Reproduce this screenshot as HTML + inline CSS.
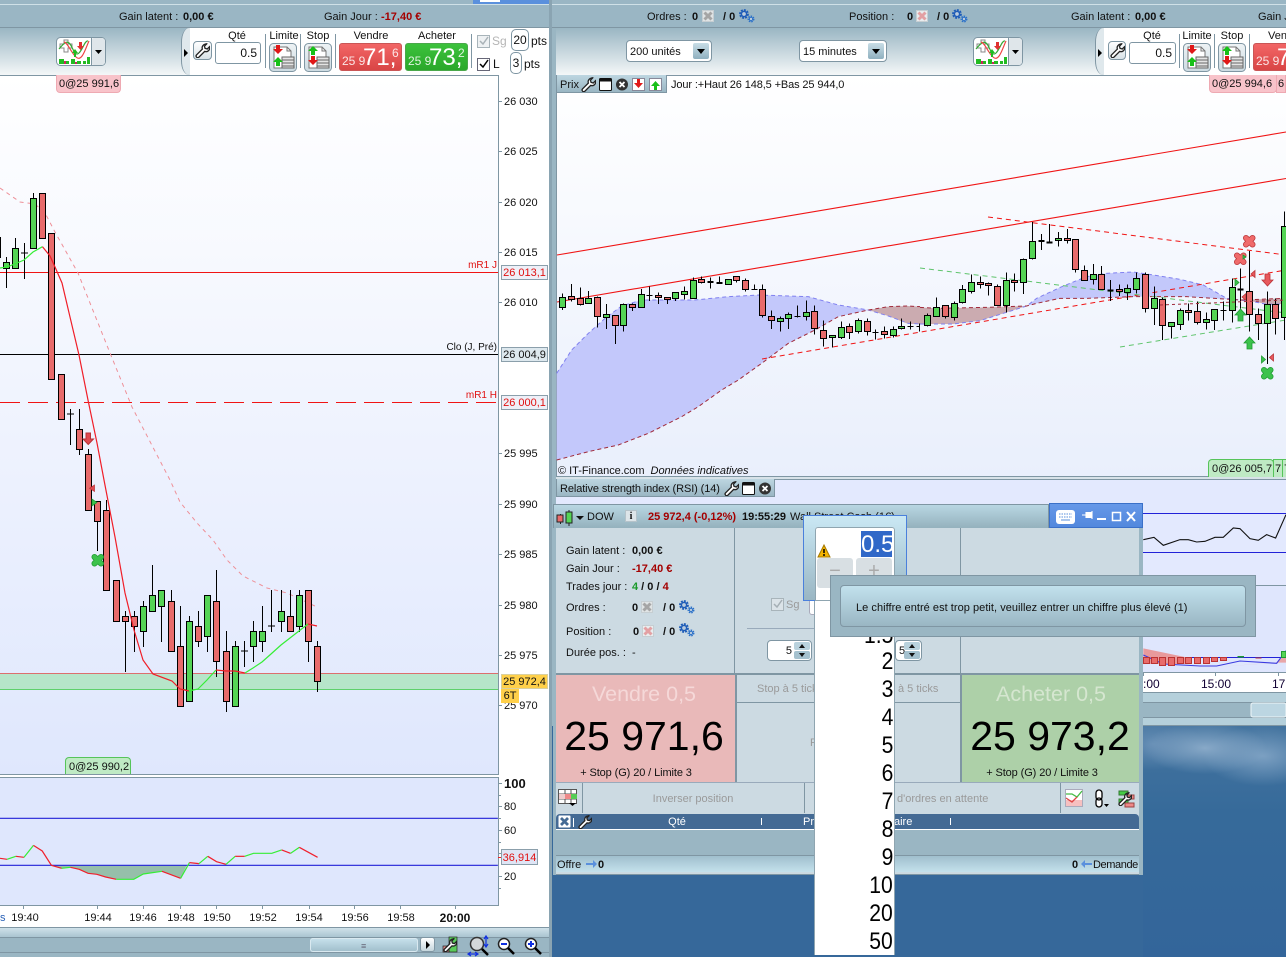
<!DOCTYPE html>
<html><head><meta charset="utf-8"><title>Trading</title>
<style>
html,body{margin:0;padding:0;width:1286px;height:957px;overflow:hidden;background:#36689a;font:11px/12px "Liberation Sans",sans-serif;color:#111}
.a{position:absolute}
.t{position:absolute;white-space:nowrap;line-height:12px;margin-top:1px}
.b{font-weight:bold}
.dr{color:#a40000}
.tb{background:linear-gradient(#9ab6c3,#f4f7f8)}
.in{position:absolute;background:#fff;border:1px solid #7f96a3;border-radius:3px;box-sizing:border-box}
.btn{position:absolute;box-sizing:border-box;border:1px solid #7f96a3;border-radius:4px;background:linear-gradient(#fff,#d8e2e7)}
.sep{position:absolute;width:1px;background:#7f96a3}
.ax{position:absolute;left:504px;white-space:nowrap;line-height:12px;margin-top:1px}
.box{position:absolute;left:501px;width:47px;height:15px;box-sizing:border-box;border:1px solid #8b9fab;text-align:center;line-height:15px}
.tagr{position:absolute;background:#f8c3ca;border:1px solid #eea9b2;border-top:0;border-radius:0 0 4px 4px;box-sizing:border-box;line-height:18px;padding-left:2px;white-space:nowrap;overflow:hidden}
.tagg{position:absolute;background:#bfeac4;border:1px solid #56c45a;border-bottom:0;border-radius:4px 4px 0 0;box-sizing:border-box;line-height:19px;padding-left:3px;white-space:nowrap;overflow:hidden}
.lbl{position:absolute;white-space:nowrap;transform:translateX(-50%);line-height:12px;margin-top:1px}
.pb{position:absolute;box-sizing:border-box;height:28px;top:43px;border-radius:3px;color:#fff;overflow:hidden}
.red{background:linear-gradient(#f26666,#d94545);border:1px solid #c95656}
.grn{background:linear-gradient(#3cc23c,#2aa82a);border:1px solid #4aa84a}
.pb span{position:absolute;white-space:nowrap}
.s{font-size:12px;top:11px;line-height:12px;opacity:.85}
.l{font-size:24px;top:1px;line-height:26px}
.g{color:#9a9a9a}
.num{position:absolute;right:393px;font-size:24px;line-height:24px;color:#000;margin-top:1px;transform:scaleX(.88);transform-origin:right center}
svg{overflow:visible}
.ch path,.ch polyline{vector-effect:non-scaling-stroke}
</style></head><body>

<!-- wallpaper -->
<div class="a" style="left:1143px;top:726px;width:143px;height:231px;overflow:hidden;background:radial-gradient(ellipse 62px 26px at 62px 22px,rgba(140,172,202,.95) 0,rgba(140,172,202,0) 100%),radial-gradient(ellipse 60px 30px at 120px 30px,rgba(130,165,198,.9) 0,rgba(130,165,198,0) 100%),radial-gradient(ellipse 50px 26px at 10px 18px,rgba(110,148,186,.8) 0,rgba(110,148,186,0) 100%),linear-gradient(#44749f,#366a9a 38%,#33659a)"></div>

<!-- LEFT WINDOW frames -->
<div class="a" style="left:0;top:0;width:552px;height:28px;background:#9ab6c4"></div>
<div class="a" style="left:473px;top:0;width:77px;height:4px;background:#5a90dd"></div>
<div class="a" style="left:480px;top:0;width:20px;height:2px;background:#fff"></div>
<div class="a" style="left:0;top:4px;width:549px;height:1px;background:#cfe0e7"></div>
<div class="a" style="left:0;top:27px;width:549px;height:1px;background:#7f96a3"></div>
<div class="a tb" style="left:0;top:28px;width:549px;height:47px"></div>
<div class="a" style="left:549px;top:0;width:3px;height:957px;background:#8aa4b2"></div>

<!-- RIGHT WINDOW frames -->
<div class="a" style="left:552px;top:0;width:734px;height:28px;background:#9ab6c4"></div>
<div class="a" style="left:552px;top:4px;width:734px;height:1px;background:#cfe0e7"></div>
<div class="a" style="left:552px;top:27px;width:734px;height:1px;background:#7f96a3"></div>
<div class="a tb" style="left:552px;top:28px;width:734px;height:47px"></div>
<div class="a" style="left:552px;top:28px;width:4px;height:698px;background:#9ab6c3"></div>
<div class="a" style="left:552px;top:726px;width:591px;height:231px;background:#36689a"></div>

<!-- CHARTS -->
<svg class="a ch" style="left:0;top:0" width="1286" height="957" viewBox="0 0 1286 957">
<defs>
<linearGradient id="bgl" x1="0" y1="0" x2="0" y2="1"><stop offset="0" stop-color="#fff"/><stop offset="1" stop-color="#dfe7fd"/></linearGradient>
<linearGradient id="bgr" x1="0" y1="0" x2="0" y2="1"><stop offset="0" stop-color="#fff"/><stop offset="1" stop-color="#e9effc"/></linearGradient>
<symbol id="w" viewBox="0 0 20 20"><path d="M15 1.500a5 5 0 0 0-5.200 6.600L2 15.900a2.200 2.200 0 0 0 3.100 3.100l7.800-7.800a5 5 0 0 0 6.500-6.200l-3 3-3-.8-.8-3 3-3a5 5 0 0 0-.6-.2z" fill="#fff" stroke="#222" stroke-width="1.300"/></symbol>
</defs>
<!-- left chart -->
<rect x="0" y="75" width="549" height="702" fill="#fff"/>
<rect x="0" y="75" width="498" height="699" fill="url(#bgl)"/>
<rect x="0" y="777" width="549" height="150" fill="#fff"/>
<rect x="0" y="777" width="498" height="128" fill="#dfe7fd"/>
<rect x="0" y="673" width="498" height="16" fill="#b6e5c9"/>
<path d="M0 673.5H498" stroke="#dc6e6e" fill="none"/>
<path d="M0 689.5H498" stroke="#5fd06c" fill="none"/>
<path d="M0 272.5H498" stroke="#f01414" fill="none"/>
<path d="M0 354.5H498" stroke="#000" fill="none"/>
<path d="M0 402.5H498" stroke="#f01414" stroke-dasharray="20 8" fill="none"/>
<path d="M0 188L20 202 35 204 45 213 55 232 78 273 110 353 132 407 170 480 180 502 197 523 213 540 227 560 243 576 267 588 287 593 317 607" fill="none" stroke="#ee9098" stroke-dasharray="4 4"/>
<g shape-rendering="crispEdges" fill="none" stroke="#000">
<path d="M0.5 237V258M6.5 257V288M15.5 238V268M24.5 243V279M21 253H28M33.5 193V198M70.5 409V445M67 414H74M79.5 409V455M88.5 449V454M97.5 521V551M106.5 500V510M125.5 611V672M134.5 611V652M143.5 601V647M152.5 565V595M161.5 606V642M171.5 590V601M180.5 606V646M189.5 616V621M198.5 611V647M207.5 636V652M216.5 570V677M226.5 631V712M235.5 641V646M244.5 641V667M241 651H248M253.5 621V662M262.5 606V652M271.5 590V632M268 626H275M281.5 590V632M290.5 590V616M299.5 590V632M308.5 641V662M317.5 641V692"/>
<path fill="#e86b6b" d="M39.5 193.5h6v45h-6zM48.5 233.5h6v146h-6zM58.5 374.5h6v45h-6zM76.5 429.5h6v20h-6zM85.5 454.5h6v56h-6zM94.5 501.5h6v20h-6zM103.5 510.5h6v80h-6zM113.5 580.5h6v41h-6zM122.5 616.5h6v5h-6zM131.5 616.5h6v10h-6zM168.5 601.5h6v50h-6zM177.5 646.5h6v60h-6zM195.5 626.5h6v15h-6zM213.5 601.5h6v60h-6zM223.5 651.5h6v50h-6zM287.5 616.5h6v15h-6zM305.5 590.5h6v51h-6zM314.5 646.5h6v35h-6z"/>
<path fill="#55d455" d="M3.5 262.5h6v6h-6zM12.5 248.5h6v20h-6zM30.5 198.5h6v50h-6zM140.5 606.5h6v25h-6zM149.5 595.5h6v16h-6zM158.5 590.5h6v16h-6zM186.5 621.5h6v80h-6zM204.5 595.5h6v41h-6zM232.5 646.5h6v60h-6zM250.5 631.5h6v15h-6zM259.5 631.5h6v10h-6zM278.5 611.5h6v10h-6zM296.5 595.5h6v31h-6z"/>
</g>
<g fill="none" stroke-width="1.200">
<path d="M0 268L7 267 17 263 24 260 33 252 42.5 246.7" stroke="#35ee35"/>
<path d="M42.5 246.7L50 256 55 267 62 283 70 317 79 355 88 400 97 443 104 480 115 537 125 593 134 630 143 660 153 674 172 681 180 689 189 691" stroke="#f01e28"/>
<path d="M189 691L198 689 207 680 216 670" stroke="#35ee35"/>
<path d="M216 670L226 671 235 671 245 673" stroke="#f01e28"/>
<path d="M245 673L253 668 262 662 271 654 281 645 290 638 299 631 308 624" stroke="#35ee35"/>
<path d="M308 624L317 626" stroke="#f01e28"/>
</g>
<path d="M86 433h4.500v6h3l-5.250 5.500-5.250-5.500h3z" fill="#e04a50" stroke="#b93338"/>
<path d="M94.500 485v6.500l-5-3.250z" fill="#e04a50" stroke="#b93338" stroke-width=".7"/>
<path d="M92 499v7l5-3.500z" fill="#3cc24c" stroke="#1f9a32" stroke-width=".7"/>
<!-- left RSI -->
<g transform="translate(0,750) scale(.3521,.3333)">
<path d="M146 346L175 355 200 352 225 358 250 370 275 373 300 381 330 388 380 388 407 372 460 364 513 385 530 346z" fill="#96bfaa"/>
<path d="M0 205H1414M0 346H1414" stroke="#2222d8" fill="none" stroke-width="1.200"/>
<g fill="none" stroke-width="1.200">
<path d="M0 325L20 328" stroke="#f0202c"/>
<path d="M20 328L45 319" stroke="#35ee35"/>
<path d="M45 319L68 322" stroke="#f0202c"/>
<path d="M68 322L95 286" stroke="#35ee35"/>
<path d="M95 286L120 303 146 346 175 355" stroke="#f0202c"/>
<path d="M175 355L200 352" stroke="#35ee35"/>
<path d="M200 352L225 358 250 370 275 373 300 381 330 388" stroke="#f0202c"/>
<path d="M330 388L380 388 407 372 460 364" stroke="#35ee35"/>
<path d="M460 364L513 385" stroke="#f0202c"/>
<path d="M513 385L538 338" stroke="#35ee35"/>
<path d="M538 338L565 341" stroke="#f0202c"/>
<path d="M565 341L590 319" stroke="#35ee35"/>
<path d="M590 319L615 335 642 343" stroke="#f0202c"/>
<path d="M642 343L668 319" stroke="#35ee35"/>
<path d="M668 319L695 319" stroke="#f0202c"/>
<path d="M695 319L720 310 772 310 800 300" stroke="#35ee35"/>
<path d="M800 300L825 310" stroke="#f0202c"/>
<path d="M825 310L850 292" stroke="#35ee35"/>
<path d="M850 292L902 322" stroke="#f0202c"/>
</g>
</g>
<!-- left borders -->
<g shape-rendering="crispEdges" stroke="#7f96a3" fill="none">
<path d="M0 75.500H498.500V774.500H0M0 777.500H498.500V905.500H0"/>
<path d="M498 101.500h4M498 151.500h4M498 202.500h4M498 252.500h4M498 302.500h4M498 453.500h4M498 504.500h4M498 554.500h4M498 605.500h4M498 655.500h4M498 705.500h4M498 783.500h4M498 795.500h3M498 806.500h4M498 818.500h3M498 830.500h4M498 842.500h3M498 853.500h3M498 876.500h4M498 888.500h3M23.500 905v4M97.500 905v4M143.500 905v4M180.500 905v4M216.500 905v4M262.500 905v4M309.500 905v4M354.500 905v4M400.500 905v4M455.500 905v4"/>
</g>
<path d="M498 857.500h3" stroke="#f02020"/>

<!-- right chart -->
<rect x="556" y="75" width="730" height="402" fill="url(#bgr)"/>
<rect x="556" y="477" width="730" height="2" fill="#d7e2e8"/>
<rect x="556" y="479" width="730" height="107" fill="#e3e9fe"/>
<rect x="556" y="586" width="730" height="86" fill="#dfe6fd"/>
<rect x="556" y="672" width="730" height="20" fill="#fff"/>
<rect x="556" y="692" width="730" height="10" fill="#b5d0db"/>
<rect x="556" y="702" width="730" height="15" fill="#9ab6c3"/>
<rect x="556" y="717" width="730" height="9" fill="#b5d0db"/>
<g shape-rendering="crispEdges" stroke="#7f96a3" fill="none"><path d="M556 75.500H1286M556.500 75V477M556 476.500H1286M556 479.500H1286M556 585.500H1286M556 672.500H1286M556 692.500H1286M556 702.500H1286M556 717.500H1286M556 725.500H1286M1215.500 672v4M1143.500 672v4M1278.500 672v4"/></g>
<rect x="1251" y="703" width="35" height="14" rx="2" fill="#bcd6e2" stroke="#eef5f8"/>
<!-- right RSI -->
<path d="M556 513.500H1286M556 552.500H1286M556 657.500H1286" stroke="#2222d8" fill="none"/>
<g transform="translate(900,478) scale(.3333)"><path d="M730 185L762 178 790 202 840 185 865 185 890 192 915 190 945 178 970 178 1000 150 1020 152 1050 182 1075 187 1100 170 1127 180 1158 110" fill="none" stroke="#111" stroke-width="1.100"/></g>
<g transform="translate(1100,640) scale(.3333)">
<path d="M130 25L260 52V72H130z" fill="#e89a9c"/>
<path d="M260 52L340 82 520 68 528 68 548 52 558 52V68L528 68 340 82z" fill="#e9a6a8"/>
<path d="M130 45L190 72 300 78 350 78 420 63 530 70 558 32" fill="none" stroke="#3a3ae0" stroke-width="1.100"/>
</g>
<g shape-rendering="crispEdges" stroke="#b33" fill="#e86b6b" transform="translate(1100,640) scale(.3333)">
<path d="M130 52h18v18h-18zM155 52h18v18h-18zM179 52h18v24h-18zM206 52h18v24h-18zM233 52h18v18h-18zM257 52h18v18h-18zM284 52h18v18h-18zM311 52h18v18h-18zM335 52h18v12h-18zM362 52h18v9h-18z"/>
<path d="M412 48h20v4h-20z" fill="#1f9a32" stroke="none"/>
<path d="M466 52h18v4h-18z" fill="#b33" stroke="none"/>
<path d="M544 34h14v18h-14z" fill="#55d455" stroke="#1f9a32"/>
</g>

<g transform="translate(555,200) scale(.33333)">
<path d="M5 520L50 450 100 400 150 355 200 318 260 300 420 300 520 290 610 285 760 290 850 315 940 330 850 350 780 390 700 430 620 490 550 540 500 570 430 620 380 650 280 700 190 735 100 755 5 780z" fill="#c3c8fb"/>
<path d="M940 330L1000 320 1060 318 1095 320V372H1060L1000 348z" fill="#cbabb0"/>
<path d="M5 520L50 450 100 400 150 355 200 318 260 300 420 300 520 290 610 285 760 290 850 315 940 330 1000 348 1060 370 1095 372" fill="none" stroke="#8080f0" stroke-dasharray="4 3"/>
<path d="M5 780L100 755 190 735 280 700 380 650 430 620 500 570 550 540 620 490 700 430 780 390 850 350 940 330 1000 320 1060 318 1095 320" fill="none" stroke="#a02a3a" stroke-dasharray="4 3"/>
</g>
<g transform="translate(920,200) scale(.33333)">
<path d="M0 322L50 325 200 322 320 318 250 340 180 362 100 372H0z" fill="#cbabb0"/>
<path d="M320 318L350 295 430 258 500 230 560 220 640 216 700 225 780 238 850 255 920 295 960 300 800 290 640 290 500 295 420 295 350 310z" fill="#c3c8fb"/>
<path d="M960 300L1098 295V312H1040L1000 305z" fill="#cbabb0"/>
<path d="M0 372L100 372 180 362 250 340 320 318 350 295 430 258 500 230 560 220 640 216 700 225 780 238 850 255 920 295 960 300 1000 305 1040 313 1098 312" fill="none" stroke="#8080f0" stroke-dasharray="4 3"/>
<path d="M0 322L50 325 200 322 320 318 350 310 420 295 500 295 640 290 800 290 960 300 1098 295" fill="none" stroke="#a02a3a" stroke-dasharray="4 3"/>
</g>
<path d="M557 255L1286 132M557 302L1286 178.500" stroke="#f01414" fill="none" stroke-width="1.100"/>
<path d="M762 359L1286 270M988 217L1286 255" stroke="#f01414" fill="none" stroke-dasharray="5 4"/>
<path d="M920 268L1286 313M1120 347L1286 320" stroke="#5fc46c" fill="none" stroke-dasharray="5 4"/>
<g transform="translate(555,200) scale(.33333)" shape-rendering="crispEdges" stroke="#000" fill="none">
<path d="M22 280V330M49 252V305M76 262V317M100 273V310M127 290V382M154 312V387M181 346V432M205 310V395M232 310V333M259 267V322M284 260V303M275 286h18M310 277V312M337 292V312M361 277V303M388 260V298M415 232V295M439 229V250M466 232V265M457 245h18M457 248h18M493 229V250M484 248h18M484 251h18M520 238V253M544 229V248M571 235V275M598 253V268M589 268h18M622 253V352M649 331V387M676 350V395M700 337V387M727 316V352M718 349h18M754 301V362M778 316V403M805 361V440M832 406V443M859 364V417M883 370V417M910 355V400M937 355V406M961 388V418M952 397h18M988 380V415M1015 380V412M1039 355V388M1066 364V388M1057 379h18M1093 370V394M1084 379h11"/>
<path fill="#e86b6b" d="M40 290h18v8h-18zM67 295h18v19h-18zM118 292h18v57h-18zM172 346h18v30h-18zM223 313h18v9h-18zM301 286h18v6h-18zM328 292h18v6h-18zM430 238h18v9h-18zM535 229h18v12h-18zM562 241h18v27h-18zM613 268h18v78h-18zM640 349h18v12h-18zM769 334h18v51h-18zM796 391h18v24h-18zM874 379h18v18h-18zM928 364h18v30h-18zM979 394h18v9h-18z"/>
<path fill="#55d455" d="M13 292h18v30h-18zM91 295h18v15h-18zM145 343h18v9h-18zM196 313h18v63h-18zM250 283h18v39h-18zM352 277h18v18h-18zM379 274h18v9h-18zM406 241h18v54h-18zM511 238h18v15h-18zM667 355h18v9h-18zM691 343h18v12h-18zM745 337h18v12h-18zM823 406h18v6h-18zM850 382h18v30h-18zM901 361h18v33h-18zM1006 388h18v18h-18zM1030 379h18v6h-18z"/>
</g>
<g transform="translate(920,200) scale(.33333)" shape-rendering="crispEdges" stroke="#000" fill="none">
<path d="M22 340V380M49 292V349M76 316V355M103 304V362M127 255V310M154 223V280M181 230V265M205 247V287M232 253V318M259 217V337M284 220V275M310 175V282M337 66V178M364 102V150M355 122h18M355 125h18M388 72V128M379 126h18M379 129h18M415 96V140M442 87V130M466 118V218M493 196V241M520 192V253M544 198V268M571 240V303M562 270h18M562 273h18M598 253V288M622 253V300M649 217V280M676 217V338M703 259V375M727 292V420M754 367V415M781 325V390M805 310V362M832 304V373M859 337V388M883 328V390M910 304V362M901 331h18M937 235V367M961 205V325M952 267h18M952 270h18M988 153V395M1015 325V420M1042 274V492M1066 295V403M1093 34V420"/>
<path fill="#e86b6b" d="M67 316h18v33h-18zM172 247h18v6h-18zM196 250h18v6h-18zM223 259h18v57h-18zM275 241h18v6h-18zM433 115h18v6h-18zM457 118h18v90h-18zM484 211h18v30h-18zM535 223h18v45h-18zM589 268h18v6h-18zM667 223h18v102h-18zM718 298h18v78h-18zM796 331h18v6h-18zM823 334h18v33h-18zM979 274h18v69h-18zM1006 343h18v27h-18zM1057 313h18v42h-18z"/>
<path fill="#55d455" d="M13 346h18v30h-18zM40 322h18v27h-18zM94 310h18v42h-18zM118 268h18v39h-18zM145 247h18v27h-18zM250 241h18v75h-18zM301 178h18v69h-18zM328 124h18v51h-18zM406 115h18v6h-18zM511 223h18v15h-18zM613 265h18v12h-18zM640 235h18v33h-18zM694 295h18v30h-18zM745 367h18v12h-18zM772 331h18v42h-18zM850 358h18v9h-18zM874 328h18v33h-18zM928 262h18v69h-18zM1033 313h18v57h-18zM1084 80h18v272h-18z"/>
</g>
<path d="M1160 305L1286 300" stroke="#a02a3a" stroke-dasharray="3 3" fill="none"/>
<!-- markers -->
<g stroke-linecap="round" fill="none">
<path d="M1246 238l6.500 6.500M1252.500 238l-6.500 6.500" stroke="#b93338" stroke-width="6"/>
<path d="M1246 238l6.500 6.500M1252.500 238l-6.500 6.500" stroke="#ef6a6a" stroke-width="4.500"/>
<path d="M1237 255.500l6.500 6.500M1243.500 255.500l-6.500 6.500" stroke="#b93338" stroke-width="6"/>
<path d="M1237 255.500l6.500 6.500M1243.500 255.500l-6.500 6.500" stroke="#ef6a6a" stroke-width="4.500"/>
<path d="M1264 370l6.500 6.500M1270.500 370l-6.500 6.500" stroke="#1f9a32" stroke-width="6"/>
<path d="M1264 370l6.500 6.500M1270.500 370l-6.500 6.500" stroke="#3cc24c" stroke-width="4.500"/>
<path d="M94.500 557l6.500 6.500M101 557l-6.500 6.500" stroke="#1f9a32" stroke-width="6"/>
<path d="M94.500 557l6.500 6.500M101 557l-6.500 6.500" stroke="#3cc24c" stroke-width="4.500"/>
</g>
<g stroke-width=".8">
<path d="M1265 274h5v6h3l-5.500 6-5.500-6h3z" fill="#e8585c" stroke="#b93338"/>
<path d="M1238 321v-6h-3l5.500-6 5.500 6h-3v6z" fill="#3cc24c" stroke="#1f9a32"/>
<path d="M1247 349v-6h-3l5.500-6 5.500 6h-3v6z" fill="#3cc24c" stroke="#1f9a32"/>
<path d="M1235 279v7l4-3.500z" fill="#3cc24c" stroke="#1f9a32"/>
<path d="M1243 255v4l3-2z" fill="#3cc24c" stroke="#1f9a32"/>
<path d="M1255 270.500v7l-4-3.500z" fill="#e8585c" stroke="#b93338"/>
<path d="M1246 293.500v7l-4-3.500z" fill="#e8585c" stroke="#b93338"/>
<path d="M1261.500 356v7l4-3.500z" fill="#3cc24c" stroke="#1f9a32"/>
<path d="M1273.500 354v7l-4-3.500z" fill="#e8585c" stroke="#b93338"/>
</g>
</svg>

<!-- LEFT: labels -->
<span class="t" style="left:119px;top:10px">Gain latent :</span><span class="t b" style="left:183px;top:10px">0,00 €</span>
<span class="t" style="left:324px;top:10px">Gain Jour :</span><span class="t b dr" style="left:381px;top:10px">-17,40 €</span>
<div class="a" style="left:181px;top:28px;width:10px;height:47px;background:#dfe8ec;border-left:1px solid #7f96a3;border-radius:8px 0 0 8px/14px 0 0 14px;box-sizing:border-box"></div>
<div class="a" style="left:190px;top:28px;width:359px;height:47px;background:#fff"></div>
<div class="a" style="left:184px;top:49px;width:0;height:0;border-left:4px solid #000;border-top:4px solid transparent;border-bottom:4px solid transparent"></div>
<div class="btn" style="left:193px;top:41px;width:19px;height:19px"><svg width="15" height="15" style="position:absolute;left:1px;top:1px"><use href="#w" width="15" height="15"/></svg></div>
<span class="lbl" style="left:237px;top:29px">Qté</span>
<div class="in" style="left:215px;top:42px;width:46px;height:22px;text-align:right;padding:4px 3px 0 0;line-height:13px;font-size:12px">0.5</div>
<div class="sep" style="left:265px;top:34px;height:34px"></div>
<span class="lbl" style="left:284px;top:29px">Limite</span>
<div class="sep" style="left:300px;top:34px;height:34px"></div>
<span class="lbl" style="left:318px;top:29px">Stop</span>
<div class="sep" style="left:335px;top:34px;height:34px"></div>
<span class="lbl" style="left:371px;top:29px">Vendre</span>
<span class="lbl" style="left:437px;top:29px">Acheter</span>
<div class="pb red" style="left:339px;width:63px"><span class="s" style="left:2px">25 9</span><span class="l" style="left:23px">71,</span><span style="left:52px;top:2px;font-size:12px;line-height:14px;opacity:.85">6</span></div>
<div class="pb grn" style="left:405px;width:63px"><span class="s" style="left:2px">25 9</span><span class="l" style="left:23px">73,</span><span style="left:52px;top:2px;font-size:12px;line-height:14px;opacity:.85">2</span></div>
<div class="sep" style="left:471px;top:34px;height:34px"></div>
<svg class="a" style="left:477px;top:35px" width="13" height="13"><rect x=".5" y=".5" width="12" height="12" fill="#eef1f3" stroke="#a8b4ba"/><path d="M3 6l3 3 5-7" fill="none" stroke="#a9b2b7" stroke-width="1.500"/></svg>
<span class="t" style="left:492px;top:34px;color:#b5b5b5;font-size:12px">Sg</span>
<div class="in" style="left:511px;top:29px;width:18px;height:22px;text-align:center;line-height:21px;font-size:12px;border-radius:5px">20</div>
<span class="t" style="left:531px;top:34px;font-size:12px">pts</span>
<svg class="a" style="left:477px;top:58px" width="13" height="13"><rect x=".5" y=".5" width="12" height="12" fill="#fff" stroke="#667"/><path d="M3 6l3 3 5-7" fill="none" stroke="#000" stroke-width="1.500"/></svg>
<span class="t" style="left:493px;top:57px;font-size:12px">L</span>
<div class="in" style="left:510px;top:52px;width:12px;height:22px;text-align:center;line-height:21px;font-size:12px;border-radius:5px">3</div>
<span class="t" style="left:524px;top:57px;font-size:12px">pts</span>

<div class="tagr" style="left:56px;top:75px;width:65px;height:18px">0@25 991,6</div>
<div class="tagg" style="left:65px;top:757px;width:66px;height:17px">0@25 990,2</div>

<span class="ax" style="top:95px">26 030</span><span class="ax" style="top:145px">26 025</span><span class="ax" style="top:196px">26 020</span><span class="ax" style="top:246px">26 015</span><span class="ax" style="top:296px">26 010</span>
<span class="ax" style="top:447px">25 995</span><span class="ax" style="top:498px">25 990</span><span class="ax" style="top:548px">25 985</span><span class="ax" style="top:599px">25 980</span><span class="ax" style="top:649px">25 975</span><span class="ax" style="top:699px">25 970</span>
<div class="box" style="top:265px;color:#e01010;background:#eef0f8">26 013,1</div>
<div class="box" style="top:347px;background:#dde8ee">26 004,9</div>
<div class="box" style="top:395px;color:#e01010;background:#eef0f8">26 000,1</div>
<div class="box" style="top:674px;background:#ffd04a;border-color:#d9d0a0">25 972,4</div>
<div class="box" style="top:689px;width:18px;height:14px;background:#ffd04a;border:0;line-height:15px">6T</div>
<span class="t" style="right:789px;top:259px;color:#e01010;font-size:10px">mR1 J</span>
<span class="t" style="right:789px;top:341px;font-size:10px">Clo (J, Pré)</span>
<span class="t" style="right:789px;top:389px;color:#e01010;font-size:10px">mR1 H</span>

<span class="ax b" style="top:777px;font-size:13px">100</span><span class="ax" style="top:800px;left:504px">80</span><span class="ax" style="top:824px">60</span><span class="ax" style="top:870px">20</span>
<div class="box" style="left:501px;top:849px;width:37px;height:16px;color:#e01010;background:#dfe5f5;line-height:16px">36,914</div>

<span class="lbl" style="left:25px;top:911px">19:40</span><span class="lbl" style="left:98px;top:911px">19:44</span><span class="lbl" style="left:143px;top:911px">19:46</span><span class="lbl" style="left:181px;top:911px">19:48</span><span class="lbl" style="left:217px;top:911px">19:50</span><span class="lbl" style="left:263px;top:911px">19:52</span><span class="lbl" style="left:309px;top:911px">19:54</span><span class="lbl" style="left:355px;top:911px">19:56</span><span class="lbl" style="left:401px;top:911px">19:58</span><span class="lbl b" style="left:455px;top:911px;font-size:12px">20:00</span>
<span class="t" style="left:0;top:911px;color:#2a62b8">s</span>

<!-- left bottom bar -->
<div class="a" style="left:0;top:927px;width:549px;height:30px;background:#9ab6c3"></div>
<div class="a" style="left:0;top:927px;width:549px;height:10px;background:linear-gradient(#7f96a3 0,#7f96a3 1px,#cfe1e9 1px,#aac4d0 100%)"></div>
<div class="a" style="left:0;top:937px;width:549px;height:1px;background:#7f96a3"></div>
<div class="a" style="left:0;top:952px;width:549px;height:1px;background:#7f96a3"></div>
<div class="a" style="left:310px;top:938px;width:108px;height:14px;border-radius:3px;background:linear-gradient(#c8e2ed,#9fbdca);box-shadow:inset 0 0 0 1px #d9e9f0"></div>
<div class="t" style="left:361px;top:939px;color:#667;font-size:9px">≡</div>
<div class="a" style="left:420px;top:937px;width:15px;height:15px;border-radius:3px;background:linear-gradient(#fff,#c5d6dd);border:1px solid #7f96a3;box-sizing:border-box"></div>
<div class="a" style="left:426px;top:941px;width:0;height:0;border-left:4px solid #000;border-top:4px solid transparent;border-bottom:4px solid transparent"></div>
<svg class="a" style="left:443px;top:933px" width="100" height="24">
<rect x="6" y="4" width="8" height="15" fill="#5acb5a" stroke="#222" stroke-width=".7"/><rect x="0" y="13" width="6" height="6" fill="#e08a8a" stroke="#222" stroke-width=".7"/>
<use href="#w" x="0" y="5" width="14" height="14"/>
<circle cx="34" cy="11" r="6.500" fill="#d4d8da" stroke="#333" stroke-width="1.500"/><path d="M39 16l6 6" stroke="#000" stroke-width="2.500"/>
<path d="M43 4v9M41 6l2-3 2 3M41 11l2 3 2-3M26 21h8M28 19l-3 2 3 2M32 19l3 2-3 2" stroke="#1030e0" stroke-width="1.200" fill="none"/>
<circle cx="61" cy="11" r="5.500" fill="#fff" stroke="#222" stroke-width="1.500"/><path d="M58 11h6" stroke="#1030e0" stroke-width="2"/><path d="M65 15l6 6" stroke="#000" stroke-width="2.500"/>
<circle cx="88" cy="11" r="5.500" fill="#fff" stroke="#222" stroke-width="1.500"/><path d="M85 11h6M88 8v6" stroke="#1030e0" stroke-width="2"/><path d="M92 15l6 6" stroke="#000" stroke-width="2.500"/>
</svg>

<!-- RIGHT toolbar -->
<span class="t" style="left:647px;top:10px">Ordres :</span><span class="t b" style="left:692px;top:10px">0</span>
<span class="t b" style="left:723px;top:10px">/ 0</span>
<span class="t" style="left:849px;top:10px">Position :</span><span class="t b" style="left:907px;top:10px">0</span>
<span class="t b" style="left:937px;top:10px">/ 0</span>
<span class="t" style="left:1071px;top:10px">Gain latent :</span><span class="t b" style="left:1135px;top:10px">0,00 €</span>
<span class="t" style="left:1258px;top:10px">Gain J</span>
<div class="in" style="left:626px;top:40px;width:86px;height:22px;border-radius:4px;padding:5px 0 0 3px;line-height:13px">200 unités</div>
<div class="a" style="left:693px;top:43px;width:16px;height:16px;border-radius:2px;background:linear-gradient(#c8dde6,#8fb0bf)"></div><div class="a" style="left:697px;top:49px;border-top:5px solid #000;border-left:4px solid transparent;border-right:4px solid transparent"></div>
<div class="in" style="left:799px;top:40px;width:88px;height:22px;border-radius:4px;padding:5px 0 0 3px;line-height:13px">15 minutes</div>
<div class="a" style="left:868px;top:43px;width:16px;height:16px;border-radius:2px;background:linear-gradient(#c8dde6,#8fb0bf)"></div><div class="a" style="left:872px;top:49px;border-top:5px solid #000;border-left:4px solid transparent;border-right:4px solid transparent"></div>

<div class="a" style="left:1095px;top:28px;width:10px;height:47px;background:#dfe8ec;border-left:1px solid #7f96a3;border-radius:8px 0 0 8px/14px 0 0 14px;box-sizing:border-box"></div>
<div class="a" style="left:1104px;top:28px;width:182px;height:47px;background:#fff"></div>
<div class="a" style="left:1098px;top:49px;border-left:4px solid #000;border-top:4px solid transparent;border-bottom:4px solid transparent"></div>
<div class="btn" style="left:1108px;top:41px;width:18px;height:19px"><svg width="15" height="15" style="position:absolute;left:1px;top:1px"><use href="#w" width="15" height="15"/></svg></div>
<span class="lbl" style="left:1152px;top:29px">Qté</span>
<div class="in" style="left:1129px;top:42px;width:47px;height:22px;text-align:right;padding:4px 3px 0 0;line-height:13px;font-size:12px">0.5</div>
<div class="sep" style="left:1179px;top:34px;height:34px"></div>
<span class="lbl" style="left:1197px;top:29px">Limite</span>
<div class="sep" style="left:1214px;top:34px;height:34px"></div>
<span class="lbl" style="left:1232px;top:29px">Stop</span>
<div class="sep" style="left:1249px;top:34px;height:34px"></div>
<span class="t" style="left:1268px;top:29px">Ven</span>
<div class="pb red" style="left:1253px;width:63px"><span class="s" style="left:2px">25 9</span><span class="l" style="left:23px">71,</span></div>

<!-- indicator buttons + icon buttons + status icons -->
<svg class="a" style="left:0;top:0" width="1286" height="660" viewBox="0 0 1286 660">
<defs>
<g id="ind">
<rect x=".5" y=".5" width="49" height="28" rx="4" fill="#fff" stroke="#7f96a3"/>
<rect x="35" y="1" width="14" height="27" rx="3" fill="#dfe6ea"/><path d="M35.500 1v27" stroke="#7f96a3"/>
<path d="M39 13h7l-3.500 4z" fill="#000"/>
<path d="M8 3h4v4h4v4h-4v4H8v-4H4V7h4z" fill="#fff" stroke="#888"/>
<path d="M3 12C8 6 11 3 14 7s5 13 9 9 6-13 9-12" fill="none" stroke="#3a3" stroke-width="1.200"/>
<path d="M8 5C12 6 14 14 20 20s10-10 13-16" fill="none" stroke="#e44" stroke-width="1.200"/>
<path d="M16 16l3-4 3 4h-2v4h-2v-4z" fill="#22bb22"/><path d="M23 5h3v4h2l-3.500 4-3.500-4h2z" fill="#e03030"/>
<path d="M3 22h5v5H3zM10 24h3v3h-3zM15 22h4v5h-4zM21 24h4v3h-4zM27 24h3v3h-3z" fill="#22bb22"/>
<path d="M31 20h3v7h-3z" fill="#22bb22"/><path d="M8 24h2v3H8zM19 25h2v2h-2z" fill="#d02060"/>
</g>
<g id="lm">
<rect x=".5" y=".5" width="27" height="28" rx="4" fill="url(#ibg)" stroke="#7f96a3"/>
<path d="M5 4h13l4 4v17H5z" fill="#fff" stroke="#777"/><path d="M18 4v4h4" fill="none" stroke="#777"/><rect x="13" y="14" width="12" height="11" fill="#e4e4e4" stroke="#666"/><path d="M13 17h12M13 20h12M13 23h12" stroke="#666"/>
</g>
<linearGradient id="ibg" x1="0" y1="0" x2="0" y2="1"><stop offset="0" stop-color="#eef3f5"/><stop offset="1" stop-color="#cddbe2"/></linearGradient>
<g id="arrd"><path d="M-2-5h4v4h3l-5 5-5-5h3z" fill="#e01818"/></g>
<g id="arru"><path d="M-2 5h4V1h3l-5-5-5 5h3z" fill="#18c018"/></g>
<g id="gear"><circle cx="5" cy="5" r="4" fill="none" stroke="#1e5cb8" stroke-width="1.800" stroke-dasharray="2 1.100"/><circle cx="5" cy="5" r="2.600" fill="#bcd" stroke="#1e5cb8" stroke-width="1.500"/><circle cx="12" cy="10" r="2.800" fill="none" stroke="#2a70c8" stroke-width="1.400" stroke-dasharray="1.500 1"/><circle cx="12" cy="10" r="1.700" fill="#bcd" stroke="#2a70c8"/></g>
<g id="xg"><rect x=".5" y=".5" width="11" height="11" fill="#dfe3e4" stroke="#c6ced2"/><path d="M2.500 2.500l7 7M9.500 2.500l-7 7" stroke="#a5a5a5" stroke-width="3"/></g>
<g id="xr"><rect x=".5" y=".5" width="11" height="11" fill="#e8ecee" stroke="#c6ced2"/><path d="M2.500 2.500l7 7M9.500 2.500l-7 7" stroke="#e3a0a3" stroke-width="3"/></g>
</defs>
<use href="#ind" x="56" y="37"/>
<use href="#ind" x="973" y="37"/>
<use href="#lm" x="269" y="43"/><use href="#arrd" x="278" y="50"/><use href="#arru" x="278" y="61"/>
<use href="#lm" x="304" y="43"/><use href="#arru" x="313" y="50"/><use href="#arrd" x="313" y="61"/>
<use href="#lm" x="1183" y="43"/><use href="#arrd" x="1192" y="50"/><use href="#arru" x="1192" y="61"/>
<use href="#lm" x="1218" y="43"/><use href="#arru" x="1227" y="50"/><use href="#arrd" x="1227" y="61"/>
<use href="#xg" x="702" y="10"/><use href="#gear" x="739" y="9"/>
<use href="#xr" x="916" y="10"/><use href="#gear" x="952" y="9"/>
</svg>

<!-- Prix legend -->
<div class="a" style="left:556px;top:75px;width:111px;height:18px;background:linear-gradient(#bdd6e1,#9ab6c3);border:1px solid #7f96a3;border-top:0;box-sizing:border-box"></div>
<span class="t" style="left:560px;top:78px;">Prix</span>
<svg class="a" style="left:580px;top:76px" width="90" height="17">
<use href="#w" x="1" y="1" width="15" height="15"/>
<rect x="19.500" y="2.500" width="12" height="12" fill="#fff" stroke="#111" rx="1"/><rect x="19.500" y="2.500" width="12" height="3" fill="#111"/>
<circle cx="42" cy="8.500" r="6" fill="#333"/><path d="M39.500 6l5 5M44.500 6l-5 5" stroke="#fff" stroke-width="1.800"/>
<rect x="52.500" y="2.500" width="12" height="12" fill="#fff" stroke="#889"/><path d="M57 3h3v4h3l-4.500 5-4.500-5h3z" fill="#e01818"/>
<rect x="69.500" y="2.500" width="12" height="12" fill="#fff" stroke="#889"/><path d="M74 14v-4h-3l4.500-5 4.500 5h-3v4z" fill="#18c018"/>
</svg>
<span class="t" style="left:671px;top:78px;letter-spacing:-.12px">Jour :+Haut 26 148,5 +Bas 25 944,0</span>
<div class="tagr" style="left:1209px;top:75px;width:68px;height:18px">0@25 994,6</div>
<div class="tagr" style="left:1276px;top:75px;width:10px;height:18px;padding-left:1px;border-radius:0">6 8</div>
<div class="tagg" style="left:1208px;top:459px;width:66px;height:18px">0@26 005,7</div>
<div class="tagg" style="left:1273px;top:459px;width:10px;height:18px;padding-left:1px;border-radius:0">7</div>
<div class="tagg" style="left:1282px;top:459px;width:10px;height:18px;padding-left:1px;border-radius:0">7</div>
<span class="t" style="left:558px;top:464px;letter-spacing:-.03px">© IT-Finance.com&nbsp; <i>Données indicatives</i></span>

<!-- RSI legend -->
<div class="a" style="left:556px;top:479px;width:219px;height:18px;background:linear-gradient(#bdd6e1,#9ab6c3);border:1px solid #7f96a3;border-top:0;box-sizing:border-box"></div>
<span class="t" style="left:560px;top:482px;letter-spacing:-.1px">Relative strength index (RSI) (14)</span>
<svg class="a" style="left:723px;top:480px" width="50" height="17">
<use href="#w" x="1" y="1" width="15" height="15"/>
<rect x="19.500" y="2.500" width="12" height="12" fill="#fff" stroke="#111" rx="1"/><rect x="19.500" y="2.500" width="12" height="3" fill="#111"/>
<circle cx="42" cy="8.500" r="6" fill="#333"/><path d="M39.500 6l5 5M44.500 6l-5 5" stroke="#fff" stroke-width="1.800"/>
</svg>
<span class="t" style="left:1143px;top:677px;color:#110033;font-size:12px">:00</span>
<span class="t" style="left:1201px;top:677px;color:#110033;font-size:12px">15:00</span>
<span class="t" style="left:1272px;top:677px;color:#110033;font-size:12px">17:</span>

<!-- TRADING WINDOW -->
<div class="a" style="left:553px;top:504px;width:590px;height:371px;background:#ccdae2;box-shadow:inset 0 0 0 1px #7f96a3"></div>
<div class="a" style="left:553px;top:504px;width:496px;height:24px;background:linear-gradient(#b9d7e3,#94b1bd);border:1px solid #7f96a3;border-bottom:0;box-sizing:border-box"></div>
<div class="a" style="left:1049px;top:503px;width:94px;height:25px;background:linear-gradient(#6698e8,#5288dd);border:1px solid #3a70c8;box-sizing:border-box"></div>
<div class="a" style="left:553px;top:528px;width:3px;height:347px;background:#9ab6c3"></div>
<div class="a" style="left:1139px;top:528px;width:4px;height:347px;background:#9ab6c3"></div>
<svg class="a" style="left:1054px;top:508px" width="86" height="18">
<rect x="2" y="2" width="19" height="14" rx="3" fill="#fff"/><path d="M5 6h13M5 9h13" stroke="#5a90dd" stroke-dasharray="1.500 1"/><path d="M7 12h9" stroke="#5a90dd"/>
<path d="M28 7h4M32 4.500h5v5h-5zM38 3v8" stroke="#fff" fill="#fff" stroke-width="1.100"/>
<path d="M43 11h9" stroke="#fff" stroke-width="2"/>
<rect x="58.500" y="4.500" width="8" height="8" fill="none" stroke="#fff" stroke-width="1.500"/>
<path d="M73 4l8 9M81 4l-8 9" stroke="#fff" stroke-width="2"/>
</svg>
<svg class="a" style="left:556px;top:508px" width="30" height="18">
<path d="M4.500 6v10M13 2v16" stroke="#222"/><rect x="1" y="7" width="6" height="7" fill="#e86b6b" stroke="#222"/><rect x="10" y="4" width="6" height="11" fill="#55d455" stroke="#222"/>
<path d="M20 8h8l-4 4z" fill="#111"/>
</svg>
<span class="t" style="left:587px;top:510px">DOW</span>
<div class="a" style="left:625px;top:510px;width:12px;height:12px;background:#dde5e9;border:1px solid #b5c3ca;box-sizing:border-box;text-align:center;line-height:11px;font-family:'Liberation Serif',serif;font-size:10px;font-weight:bold">i</div>
<span class="t b dr" style="left:648px;top:510px">25 972,4 (-0,12%)</span>
<span class="t b" style="left:742px;top:510px">19:55:29</span>
<span class="t" style="left:790px;top:510px">Wall Street Cash (1€)</span>

<span class="t" style="left:566px;top:544px">Gain latent :</span><span class="t b" style="left:632px;top:544px">0,00 €</span>
<span class="t" style="left:566px;top:562px">Gain Jour :</span><span class="t b dr" style="left:632px;top:562px">-17,40 €</span>
<span class="t" style="left:566px;top:580px">Trades jour :</span><span class="t b" style="left:632px;top:580px"><span style="color:#1a9a2a">4</span> / 0 / <span class="dr">4</span></span>
<span class="t" style="left:566px;top:601px">Ordres :</span><span class="t b" style="left:632px;top:601px">0</span><span class="t b" style="left:663px;top:601px">/ 0</span>
<span class="t" style="left:566px;top:625px">Position :</span><span class="t b" style="left:633px;top:625px">0</span><span class="t b" style="left:663px;top:625px">/ 0</span>
<span class="t" style="left:566px;top:646px">Durée pos. :</span><span class="t" style="left:632px;top:646px">-</span>
<svg class="a" style="left:630px;top:595px" width="80" height="50">
<use href="#xg" x="11" y="6"/><use href="#gear" x="49" y="5"/>
<use href="#xr" x="12" y="30"/><use href="#gear" x="49" y="28"/>
</svg>
<div class="sep" style="left:734px;top:528px;height:145px"></div>
<div class="sep" style="left:960px;top:528px;height:145px"></div>
<div class="a" style="left:556px;top:673px;width:583px;height:2px;background:#7f96a3"></div>

<svg class="a" style="left:771px;top:598px" width="14" height="14"><rect x=".5" y=".5" width="12" height="12" fill="#dbe3e8" stroke="#a8b4ba"/><path d="M3 6l3 3 5-7" fill="none" stroke="#a5afb5" stroke-width="1.500"/></svg>
<span class="t g" style="left:786px;top:598px">Sg</span>
<div class="in" style="left:809px;top:597px;width:10px;height:18px;border-color:#aab"></div>
<div class="a" style="left:747px;top:628px;width:70px;height:1px;background:#9ab"></div>
<div class="in" style="left:767px;top:640px;width:45px;height:21px;border-radius:4px;text-align:right;padding:4px 19px 0 0;line-height:13px">5</div>
<svg class="a" style="left:794px;top:642px" width="16" height="18"><rect width="16" height="8" rx="2" fill="#b9d2dd"/><rect y="9" width="16" height="8" rx="2" fill="#a5c1ce"/><path d="M5 6l3-4 3 4zM5 11l3 4 3-4z" fill="#111"/></svg>
<div class="in" style="left:895px;top:640px;width:27px;height:21px;border-radius:4px;padding:4px 0 0 3px;line-height:13px">5</div>
<svg class="a" style="left:904px;top:642px" width="16" height="18"><rect width="16" height="8" rx="2" fill="#b9d2dd"/><rect y="9" width="16" height="8" rx="2" fill="#a5c1ce"/><path d="M5 6l3-4 3 4zM5 11l3 4 3-4z" fill="#111"/></svg>

<div class="a" style="left:736px;top:702px;width:224px;height:1px;background:#7f96a3"></div>
<span class="t g" style="left:757px;top:682px">Stop à 5 ticks</span>
<span class="t g" style="left:898px;top:682px">à 5 ticks</span>
<span class="t g" style="left:810px;top:736px">P</span>

<div class="a" style="left:556px;top:675px;width:179px;height:107px;background:#e9b9b9"></div>
<div class="a" style="left:961px;top:675px;width:178px;height:107px;background:#add0a8"></div>
<div class="a" style="left:735px;top:675px;width:2px;height:107px;background:#7f96a3"></div>
<div class="a" style="left:960px;top:675px;width:2px;height:107px;background:#7f96a3"></div>
<span class="lbl" style="left:644px;top:680px;font-size:21.500px;line-height:26px;color:#f5d8d8">Vendre 0,5</span>
<span class="lbl" style="left:644px;top:712px;font-size:41px;line-height:46px;color:#000">25 971,6</span>
<span class="lbl" style="left:636px;top:766px;letter-spacing:-.1px">+ Stop (G) 20 / Limite 3</span>
<span class="lbl" style="left:1051px;top:680px;font-size:21.500px;line-height:26px;color:#d5e6d0">Acheter 0,5</span>
<span class="lbl" style="left:1050px;top:712px;font-size:41px;line-height:46px;color:#000">25 973,2</span>
<span class="lbl" style="left:1042px;top:766px;letter-spacing:-.1px">+ Stop (G) 20 / Limite 3</span>

<div class="a" style="left:556px;top:782px;width:583px;height:32px;background:#ccdae2;border-top:1px solid #9ab;box-sizing:border-box"></div>
<div class="sep" style="left:582px;top:783px;height:30px"></div>
<div class="sep" style="left:804px;top:783px;height:30px"></div>
<div class="sep" style="left:1060px;top:783px;height:30px"></div>
<span class="lbl g" style="left:693px;top:792px">Inverser position</span>
<span class="t g" style="left:897px;top:792px">d'ordres en attente</span>
<svg class="a" style="left:558px;top:789px" width="30" height="22"><rect x=".5" y=".5" width="18" height="14" fill="#fff" stroke="#555"/><path d="M1 5h18M1 10h18M7 1v14M13 1v14" stroke="#555"/><rect x="7" y="5" width="6" height="5" fill="#e88"/><rect x="13" y="5" width="6" height="5" fill="#5c5"/><rect x="1" y="5" width="6" height="5" fill="#ecc"/><path d="M11 14h7l-3.500 3z" fill="#000"/></svg>
<svg class="a" style="left:1065px;top:789px" width="72" height="20">
<rect x=".5" y=".5" width="17" height="17" fill="#fff" stroke="#aab"/><rect x="1" y="11" width="16" height="6" fill="#f6c0c0"/><path d="M1 5h6l5 3 5-6" fill="none" stroke="#4b4" stroke-width="1.300"/><path d="M1 9l6 4 5-5" fill="none" stroke="#d44" stroke-width="1.300"/>
<path d="M34 1a3 3 0 0 1 3 3v4a3 3 0 0 1-6 0V4a3 3 0 0 1 3-3zM34 9a3 3 0 0 1 3 3v3a3 3 0 0 1-6 0v-3a3 3 0 0 1 3-3z" fill="#fff" stroke="#000" stroke-width="1.300"/><path d="M39 15h5l-2.500 3z" fill="#000"/>
<rect x="54" y="2" width="9" height="4" fill="#4c4" stroke="#373"/><rect x="60" y="6" width="9" height="4" fill="#e88" stroke="#944"/><rect x="54" y="10" width="9" height="4" fill="#4c4" stroke="#373"/><rect x="60" y="14" width="9" height="4" fill="#e88" stroke="#944"/>
<use href="#w" x="53" y="3" width="14" height="14"/>
</svg>

<div class="a" style="left:556px;top:814px;width:583px;height:15px;background:#446a94;border-radius:4px 4px 0 0"></div>
<div class="a" style="left:556px;top:829px;width:583px;height:1px;background:#fff"></div>
<div class="a" style="left:556px;top:830px;width:583px;height:25px;background:#9ab6c3"></div>
<div class="a" style="left:556px;top:855px;width:583px;height:1px;background:#7f96a3"></div>
<div class="a" style="left:556px;top:856px;width:583px;height:16px;background:linear-gradient(#a0bfcd,#c4e1ec)"></div>
<svg class="a" style="left:558px;top:815px" width="36" height="14"><rect x=".5" y=".5" width="12" height="12" rx="1" fill="#fff"/><path d="M3 3l7 7M10 3l-7 7" stroke="#446a94" stroke-width="2.800"/><path d="M15.500 3v9" stroke="#fff"/><use href="#w" x="20" y="0" width="14" height="14"/></svg>
<span class="lbl" style="left:677px;top:815px;color:#fff">Qté</span>
<div class="a" style="left:761px;top:818px;width:1px;height:7px;background:#fff"></div>
<span class="t" style="left:803px;top:815px;color:#fff">Pr</span>
<span class="t" style="left:894px;top:815px;color:#fff">aire</span>
<div class="a" style="left:950px;top:818px;width:1px;height:7px;background:#fff"></div>
<span class="t" style="left:557px;top:858px">Offre</span>
<svg class="a" style="left:585px;top:858px" width="14" height="12"><path d="M1 5h7V2l4 4-4 4V7H1z" fill="#5a90dd"/></svg>
<span class="t b" style="left:598px;top:858px">0</span>
<span class="t b" style="left:1072px;top:858px">0</span>
<svg class="a" style="left:1079px;top:858px" width="14" height="12"><path d="M13 5H6V2L2 6l4 4V7h7z" fill="#5a90dd"/></svg>
<span class="t" style="left:1093px;top:858px;letter-spacing:-.4px">Demande</span>

<!-- Popup spinner -->
<div class="a" style="left:815px;top:527px;width:79px;height:428px;background:#fff"></div>
<div class="a" style="left:803px;top:515px;width:104px;height:86px;box-sizing:border-box;border:1px solid #4a80dc;background:linear-gradient(#cae8f4,#9ab6c3)"></div>
<div class="a" style="left:815px;top:527px;width:80px;height:74px;background:#fff;border-radius:3px 3px 0 0;box-shadow:inset 0 0 0 1px #8fa5b0"></div>
<div class="a" style="left:861px;top:531px;width:31px;height:26px;background:#3068c8;color:#fff;font-size:24px;line-height:27px;text-align:center;overflow:hidden">0.5</div>
<svg class="a" style="left:817px;top:544px" width="14" height="14"><path d="M7 1l6 12H1z" fill="#f4b400" stroke="#a37800"/><path d="M7 5v4M7 10v2" stroke="#000" stroke-width="1.500"/></svg>
<div class="a" style="left:817px;top:558px;width:36px;height:30px;background:#d8dfe3;border-radius:3px;color:#aaa;font-size:20px;line-height:26px;text-align:center">−</div>
<div class="a" style="left:856px;top:558px;width:36px;height:30px;background:#d8dfe3;border-radius:3px;color:#aaa;font-size:20px;line-height:26px;text-align:center">+</div>
<div class="a" style="left:815px;top:601px;width:79px;height:354px;background:#fff;box-shadow:1px 0 0 #8fa5b0,-1px 0 0 #8fa5b0;overflow:hidden"></div>
<span class="num" style="top:623px">1.5</span><span class="num" style="top:649px">2</span><span class="num" style="top:677px">3</span><span class="num" style="top:705px">4</span><span class="num" style="top:733px">5</span><span class="num" style="top:761px">6</span><span class="num" style="top:789px">7</span><span class="num" style="top:817px">8</span><span class="num" style="top:845px">9</span><span class="num" style="top:873px">10</span><span class="num" style="top:901px">20</span><span class="num" style="top:929px">50</span>

<!-- Message -->
<div class="a" style="left:830px;top:575px;width:426px;height:62px;background:#9ab6c3;border:1px solid #7f96a3;box-sizing:border-box"></div>
<div class="a" style="left:840px;top:585px;width:406px;height:42px;background:linear-gradient(#c2e1ed,#9ab6c3);border:1px solid #7f96a3;border-radius:4px;box-sizing:border-box"></div>
<span class="t" style="left:856px;top:601px;letter-spacing:.04px">Le chiffre entré est trop petit, veuillez entrer un chiffre plus élevé (1)</span>
</body></html>
